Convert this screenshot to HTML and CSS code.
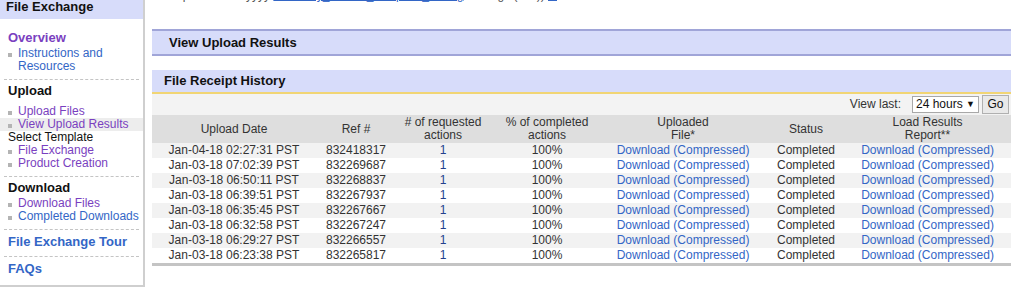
FILE: index.html
```html
<!DOCTYPE html>
<html lang="en">
<head>
    <meta charset="UTF-8">
    <title>File Exchange - View Upload Results</title>
    <link rel="stylesheet" href="styles.css">
</head>
<body>
    <div class="page">
        <div class="sidebar">
            <div class="side-head">File Exchange</div>

            <div class="side-section first">
                <a class="side-title visited" href="#">Overview</a>
                <ul class="side-links">
                    <li><a href="#">Instructions and Resources</a></li>
                </ul>
            </div>

            <div class="side-section">
                <div class="side-title plain">Upload</div>
                <ul class="side-links spaced">
                    <li><a class="visited" href="#">Upload Files</a></li>
                    <li class="active"><a class="visited" href="#">View Upload Results</a></li>
                    <li class="no-bullet">Select Template</li>
                    <li><a class="visited" href="#">File Exchange</a></li>
                    <li><a class="visited" href="#">Product Creation</a></li>
                </ul>
            </div>

            <div class="side-section">
                <div class="side-title plain">Download</div>
                <ul class="side-links">
                    <li><a class="visited" href="#">Download Files</a></li>
                    <li><a href="#">Completed Downloads</a></li>
                </ul>
            </div>

            <div class="side-section tour">
                <a class="side-title" href="#">File Exchange Tour</a>
            </div>

            <div class="side-section last">
                <a class="side-title" href="#">FAQs</a>
            </div>
        </div>

        <div class="main">
            <div class="note">
                <div class="note-text">
                    Example: Seller / yyyy <a href="#">Inventory_Loader_Template_Listing</a> Settings (.txt ))
                    <span class="note-icon"></span>
                </div>
            </div>

            <div class="page-bar">View Upload Results</div>

            <div class="history-bar">File Receipt History</div>

            <div class="history">
                <div class="filter">
                    <span>View last:</span>
                    <span class="select-box">24 hours <span class="arrow">&#9660;</span></span>
                    <span class="go-btn">Go</span>
                </div>

                <table class="results">
                    <colgroup>
                        <col style="width: 164px">
                        <col style="width: 80px">
                        <col style="width: 94px">
                        <col style="width: 114px">
                        <col style="width: 158px">
                        <col style="width: 88px">
                        <col style="width: 161px">
                    </colgroup>
                    <thead>
                        <tr>
                            <th>Upload Date</th>
                            <th>Ref #</th>
                            <th># of requested<br>actions</th>
                            <th>% of completed<br>actions</th>
                            <th>Uploaded<br>File*</th>
                            <th>Status</th>
                            <th class="last-col">Load Results<br>Report**</th>
                        </tr>
                    </thead>
                    <tbody id="resultRows"></tbody>
                </table>
            </div>
        </div>
    </div>

    <script>
        const uploads = [
            { date: 'Jan-04-18 02:27:31 PST', ref: '832418317' },
            { date: 'Jan-03-18 07:02:39 PST', ref: '832269687' },
            { date: 'Jan-03-18 06:50:11 PST', ref: '832268837' },
            { date: 'Jan-03-18 06:39:51 PST', ref: '832267937' },
            { date: 'Jan-03-18 06:35:45 PST', ref: '832267667' },
            { date: 'Jan-03-18 06:32:58 PST', ref: '832267247' },
            { date: 'Jan-03-18 06:29:27 PST', ref: '832266557' },
            { date: 'Jan-03-18 06:23:38 PST', ref: '832265817' }
        ];

        const downloadCell = '<a href="#">Download</a> (<a href="#">Compressed</a>)';
        const tbody = document.getElementById('resultRows');

        uploads.forEach(upload => {
            const row = document.createElement('tr');
            row.innerHTML = `
                <td>${upload.date}</td>
                <td>${upload.ref}</td>
                <td class="count">1</td>
                <td>100%</td>
                <td class="link-cell">${downloadCell}</td>
                <td>Completed</td>
                <td class="link-cell last-col">${downloadCell}</td>`;
            tbody.appendChild(row);
        });
    </script>
</body>
</html>
```

FILE: styles.css
```css
body {
    font-family: "Liberation Sans", Arial, sans-serif;
    font-size: 12px;
    color: #222;
    margin: 0;
    padding: 0;
    background-color: #fff;
}

a {
    color: #3366c6;
    text-decoration: none;
}

a.visited,
.side-links a.visited {
    color: #7a3fc0;
}

.page {
    display: flex;
    align-items: flex-start;
}

/* left navigation */

.sidebar {
    width: 143px;
    flex-shrink: 0;
    border-right: 2px solid #cfcfcf;
    border-bottom: 2px solid #cfcfcf;
}

.side-head {
    height: 19px;
    line-height: 14px;
    padding-left: 6px;
    background-color: #d7dcfa;
    font-weight: bold;
    font-size: 13px;
    color: #111;
}

.side-section {
    margin: 0 4px;
    padding: 4px 0 6px;
    border-bottom: 1px dashed #c4c4c4;
}

.side-section.first {
    padding-top: 12px;
}

.side-section.tour {
    padding-top: 5px;
    padding-bottom: 7px;
}

.side-section.last {
    border-bottom: none;
    padding-top: 5px;
    padding-bottom: 9px;
}

.side-title {
    display: block;
    padding-left: 4px;
    font-weight: bold;
    font-size: 13px;
    line-height: 14px;
}

.side-title.plain {
    color: #111;
}

.side-links {
    list-style-type: none;
    margin: 2px 0 0;
    padding: 0;
}

.side-links.spaced {
    margin-top: 7px;
}

.side-links li {
    position: relative;
    padding-left: 14px;
    line-height: 13px;
}

.side-links li::before {
    content: "";
    position: absolute;
    left: 4px;
    top: 6px;
    width: 4px;
    height: 4px;
    background-color: #b4b4b4;
}

.side-links li.no-bullet {
    padding-left: 4px;
    color: #111;
}

.side-links li.no-bullet::before {
    display: none;
}

.side-links li.active {
    margin: 0 -4px;
    padding-left: 18px;
    background-color: #ededed;
}

.side-links li.active::before {
    left: 8px;
}

/* main column */

.main {
    width: 859px;
    margin-left: 7px;
}

.note {
    height: 5px;
    overflow: hidden;
}

.note-text {
    margin-top: -12px;
    line-height: 14px;
    color: #555;
    white-space: nowrap;
}

.note-text a {
    text-decoration: underline;
}

.note-icon {
    display: inline-block;
    width: 9px;
    height: 10px;
    background-color: #3366c6;
    vertical-align: -2px;
}

.page-bar {
    margin-top: 24px;
    height: 23px;
    line-height: 23px;
    padding-left: 17px;
    background-color: #d7dcfa;
    border-top: 2px solid #a0a5d8;
    border-bottom: 2px solid #a0a5d8;
    font-weight: bold;
    font-size: 13px;
    color: #111;
}

.history-bar {
    margin-top: 14px;
    height: 22px;
    line-height: 22px;
    padding-left: 12px;
    background-color: #d7dcfa;
    border-bottom: 2px solid #f1d574;
    font-weight: bold;
    font-size: 13px;
    color: #111;
}

.history {
    background-color: #f3f3f3;
    border-bottom: 3px solid #c4c4c4;
}

.filter {
    display: flex;
    justify-content: flex-end;
    align-items: center;
    gap: 3px;
    height: 20px;
    padding-right: 2px;
    color: #333;
}

.filter > span:first-child {
    margin-right: 8px;
}

.select-box {
    display: inline-flex;
    align-items: center;
    justify-content: space-between;
    width: 59px;
    height: 15px;
    padding: 0 3px;
    background-color: #fff;
    border: 1px solid #a8a8a8;
    color: #111;
}

.select-box .arrow {
    font-size: 9px;
}

.go-btn {
    display: inline-block;
    width: 25px;
    height: 17px;
    line-height: 17px;
    text-align: center;
    background-color: #e9e9e9;
    border: 1px solid #b0b0b0;
    color: #111;
}

.results {
    width: 100%;
    table-layout: fixed;
    border-collapse: collapse;
    margin-top: 1px;
}

.results th {
    height: 28px;
    padding: 0;
    background-color: #dedede;
    font-weight: normal;
    line-height: 13px;
    color: #333;
    text-align: center;
    vertical-align: middle;
}

.results td {
    height: 15px;
    padding: 0;
    line-height: 15px;
    text-align: center;
    color: #333;
    white-space: nowrap;
}

.results th.last-col,
.results td.last-col {
    padding-right: 6px;
}

.results tbody tr:nth-child(odd) {
    background-color: #f2f2f2;
}

.results tbody tr:nth-child(even) {
    background-color: #fff;
}

.results td.count {
    color: #233f8e;
}

.results td.link-cell {
    color: #3366c6;
}
```
